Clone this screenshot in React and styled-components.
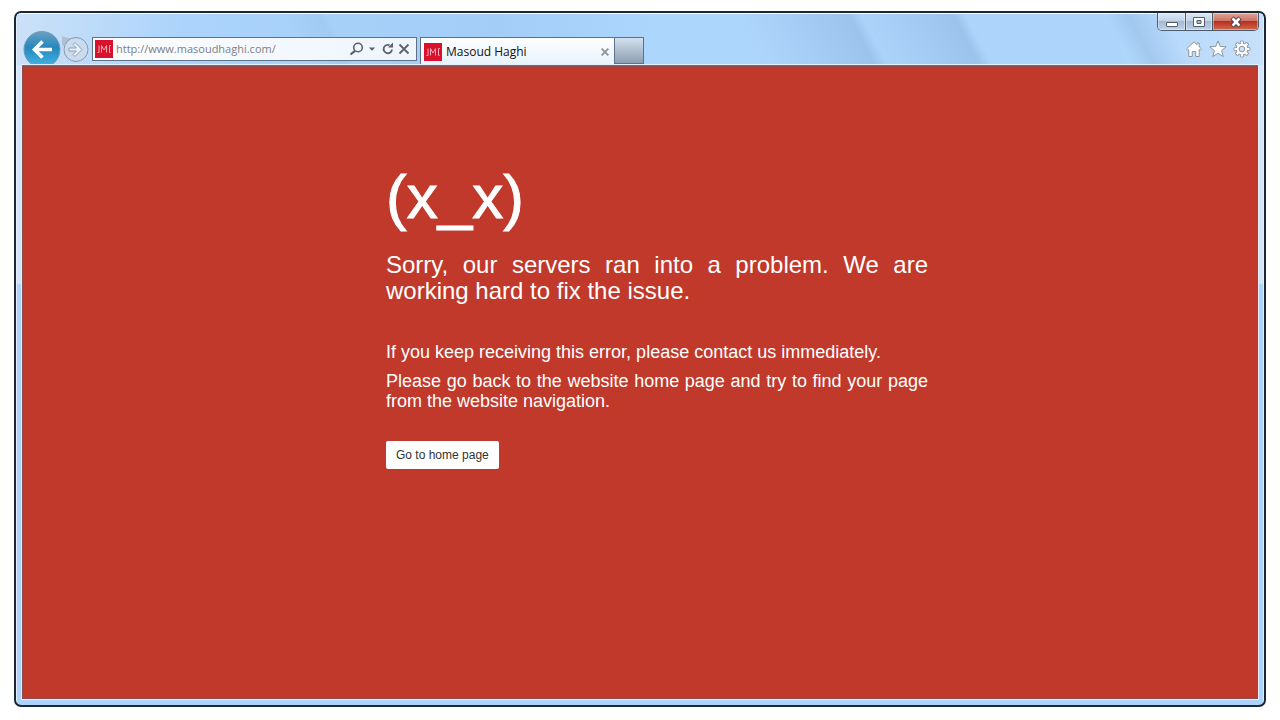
import React, { useState } from 'react';

import styled, { createGlobalStyle, ThemeProvider } from 'styled-components';

const theme = {
  page: '#c0392b',
  frame: '#1d2733',
  glass: '#abd3fb',
  line: '#5f7186',
  brand: '#d9112c',
  icon: '#5d6167',
  chromeFont: '"Open Sans", "Noto Sans", sans-serif',
  pageFont: '"Liberation Sans", Arial, sans-serif'
};

const GlobalStyle = createGlobalStyle`
  *, *::before, *::after {
    box-sizing: border-box;
  }

  body {
    margin: 0;
    background: #fff;
    font-family: ${theme.pageFont};
  }

  button, input {
    margin: 0;
    padding: 0;
    border: none;
    background: none;
    font: inherit;
  }

  svg {
    display: block;
  }
`;

const Desktop = styled.div`
  display: flex;
  min-height: 100vh;
  padding: 11px 14px 13px;
`;

const Window = styled.div`
  display: flex;
  flex: 1;
  flex-direction: column;
  padding: 0 6px 6px;
  border: 2px solid ${({theme}) => theme.frame};
  border-radius: 7px;
  background:
    linear-gradient(#fff, #fff) top / 100% 1px no-repeat,
    linear-gradient(#e2f0fe, #e2f0fe) left / 1px 100% no-repeat,
    linear-gradient(#e2f0fe, #e2f0fe) right / 1px 100% no-repeat,
    linear-gradient(#c4def9 0, #d6e7f9 54px, #d3e4f6 270px, ${({theme}) => theme.glass} 272px);
`;

const Chrome = styled.header`
  display: flex;
  justify-content: space-between;
  height: 51px;
  margin: 1px -5px 0;
  padding: 0 4px 0 5px;
  background:
    linear-gradient(62deg, transparent 56%, #96bde655 72%, transparent 76%) 165px 0 / 200px 51px no-repeat,
    linear-gradient(62deg, transparent 15%, #8db3de88 74%, transparent 81%) 720px 0 / 160px 51px no-repeat,
    linear-gradient(62deg, transparent 15%, #8db3de88 74%, transparent 81%) 832px 0 / 150px 51px no-repeat,
    linear-gradient(62deg, transparent 45%, #8db3de66 58%, transparent 80%) 1040px 0 / 140px 51px no-repeat,
    linear-gradient(90deg, #cbe1f8 0, ${({theme}) => theme.glass} 170px, #a3cdf7 480px, #add6fd 640px, #add5fc 1100px, #c8e0f9 100%);
`;

const NavBar = styled.div`
  display: flex;
  align-items: flex-start;
  padding: 16px 0 0 1px;
`;

const BackButton = styled.button`
  width: 39px;
  height: 35px;
  overflow: hidden;
`;

const ForwardButton = styled.button`
  width: 27px;
  height: 35px;
  margin-right: 3px;
`;

const AddressBar = styled.form`
  display: flex;
  align-items: center;
  width: 325px;
  height: 24px;
  margin-top: 7px;
  padding: 0 4px 0 2px;
  border: 1px solid ${({theme}) => theme.line};
  background: linear-gradient(90deg, #fcfdff, #eef5fd);
`;

const UrlInput = styled.input`
  flex: 1;
  min-width: 0;
  margin-left: 3px;
  outline: none;
  color: #7c8084;
  font-family: ${({theme}) => theme.chromeFont};
  font-size: 11px;
  line-height: 20px;
`;

const BarButton = styled.button`
  width: ${({$width}) => $width}px;
  height: 16px;
  cursor: pointer;
`;

const Tabs = styled.nav`
  display: flex;
  margin: 7px 0 0 3px;
`;

const Tab = styled.div`
  display: flex;
  align-items: center;
  width: 195px;
  height: 28px;
  padding: 0 3px;
  border: 1px solid ${({theme}) => theme.line};
  border-bottom: none;
  background: linear-gradient(#fff, #e6f2fd);
`;

const TabTitle = styled.span`
  flex: 1;
  margin-left: 4px;
  color: #111;
  font-family: ${({theme}) => theme.chromeFont};
  font-size: 12px;
  line-height: 20px;
`;

const NewTab = styled.button`
  width: 29px;
  height: 27px;
  border: 1px solid ${({theme}) => theme.line};
  border-left: none;
  background: linear-gradient(#d3e0ee, #a9b9ca 60%, #8c9eb2);
`;

const WindowTools = styled.div`
  display: flex;
  flex-direction: column;
  align-items: flex-end;
`;

const CaptionButtons = styled.div`
  display: flex;
  height: 18px;
  margin-top: -1px;
  border: 1px solid #4d5a69;
  border-top: none;
  border-radius: 0 0 5px 5px;
  overflow: hidden;
`;

const CaptionButton = styled.button`
  display: flex;
  align-items: center;
  justify-content: center;
  width: ${({$close}) => $close ? 46 : 27}px;
  background: ${({$close}) => $close
    ? 'linear-gradient(#dfa79c, #cf7466 45%, #b8301c 50%, #cf6a4e)'
    : 'linear-gradient(#dbe7f4, #c3d4e8 45%, #a4bad3 50%, #bdd2e9)'};
  box-shadow: inset 0 0 0 1px #ffffff66;

  & + & {
    border-left: 1px solid #4d5a69;
  }
`;

const ToolIcons = styled.div`
  display: flex;
  gap: 6px;
  margin: 9px 8px 0 0;
`;

const ToolButton = styled.button`
  width: 18px;
  height: 18px;
  cursor: pointer;
`;

const Viewport = styled.main`
  flex: 1;
  border-top: 1px solid ${({theme}) => theme.line};
  outline: 1px solid #e2f0fe;
  background: ${({theme}) => theme.page};
  box-shadow: inset 0 0 0 1px #8d4a4a;
  color: #fff;
`;

const Message = styled.section`
  max-width: 576px;
  margin: 0 auto;
  padding: 96px 0 40px 34px;
`;

const Face = styled.h1`
  margin: 0 0 20px;
  font-size: 62px;
  font-weight: 400;
  line-height: 70px;
  -webkit-text-stroke: 1px #fff;
`;

const Lead = styled.h2`
  margin: 0 0 38px;
  font-size: 24px;
  font-weight: 400;
  line-height: 26px;
  text-align: justify;
`;

const Text = styled.p`
  margin: 0 0 9px;
  font-size: 18px;
  line-height: 20px;
  text-align: justify;
`;

const HomeLink = styled.a`
  display: inline-block;
  margin-top: 21px;
  padding: 5px 10px;
  border-radius: 2px;
  background: #fff;
  color: #333;
  font-size: 12px;
  line-height: 18px;
  text-decoration: none;
`;

const Favicon = () => (
    <svg width="18" height="18" viewBox="0 0 18 18" aria-hidden="true">
      <rect width="18" height="18" fill={theme.brand} />
      <g fill="none" stroke="#f3a9b2" strokeWidth="1">
        <path d="M2.5 12.5h1.5v-7M15.5 12.5h-1v-7h1.5" />
        <path d="M6.5 12.5v-7l2.5 4.5 2.5-4.5v7" />
      </g>
    </svg>
);

const BackIcon = () => (
    <svg width="39" height="39" viewBox="0 0 39 39" aria-hidden="true">
      <defs>
        <linearGradient id="back" x1="0" y1="0" x2="0" y2="1">
          <stop offset="0" stopColor="#6ba0c0" />
          <stop offset="0.45" stopColor="#2687bd" />
          <stop offset="1" stopColor="#45b7e6" />
        </linearGradient>
      </defs>
      <circle cx="19" cy="19.5" r="18" fill="url(#back)" stroke="#6f9bb9" />
      <path d="M29 19.5H12M19.5 11.5l-8 8 8 8" fill="none" stroke="#fff" strokeWidth="3.6" />
    </svg>
);

const ForwardIcon = () => (
    <svg width="27" height="35" viewBox="0 0 27 35" aria-hidden="true">
      <path d="M0 6Q5 9 13 7.5Q4 10 1 17L-1 12Z" fill="#b0c0d2" />
      <circle cx="14" cy="19.5" r="12" fill="#cbdbee" stroke="#8798b0" />
      <path
          d="M7 18h7.5l-3.5-3.5 2-2 7 7-7 7-2-2 3.5-3.5H7z"
          fill="#eaf2fb"
          stroke="#8d9fb8"
          strokeLinejoin="round"
      />
    </svg>
);

const SearchIcon = () => (
    <svg width="16" height="16" viewBox="0 0 16 16" aria-hidden="true">
      <circle cx="10" cy="6.5" r="4.3" fill="none" stroke={theme.icon} strokeWidth="1.6" />
      <path d="M7 9.8L2.5 13.5" stroke={theme.icon} strokeWidth="2.2" />
    </svg>
);

const ArrowIcon = () => (
    <svg width="16" height="16" viewBox="0 0 16 16" aria-hidden="true">
      <path d="M4.8 6.5h6.4L8 9.7z" fill={theme.icon} />
    </svg>
);

const RefreshIcon = () => (
    <svg width="16" height="16" viewBox="0 0 16 16" aria-hidden="true">
      <path d="M9.5 4.2A4.2 4.2 0 1 0 12 8.5" fill="none" stroke={theme.icon} strokeWidth="1.8" />
      <path d="M8 6.5h5v-5z" fill={theme.icon} />
    </svg>
);

const CrossIcon = ({ size, color, width }) => (
    <svg width={size} height="16" viewBox="0 0 16 16" aria-hidden="true">
      <path d="M3.5 3.5l9 9M12.5 3.5l-9 9" stroke={color} strokeWidth={width} />
    </svg>
);

const MinimizeIcon = () => (
    <svg width="14" height="12" viewBox="0 0 14 12" aria-hidden="true">
      <rect x="1.5" y="6.5" width="11" height="4" rx="0.5" fill="#fff" stroke="#555d6b" />
    </svg>
);

const MaximizeIcon = () => (
    <svg width="14" height="12" viewBox="0 0 14 12" aria-hidden="true">
      <path fillRule="evenodd" d="M1.5 1.5h11v9h-11zM5 4.5v3h4v-3z" fill="#fff" stroke="#555d6b" />
    </svg>
);

const CloseIcon = () => (
    <svg width="14" height="12" viewBox="0 0 14 12" aria-hidden="true">
      <path d="M3 1.8l8 8.4M11 1.8l-8 8.4" stroke="#5b4650" strokeWidth="4.6" />
      <path d="M3.6 2.4l6.8 7.2M10.4 2.4l-6.8 7.2" stroke="#fff" strokeWidth="2.6" />
    </svg>
);

const HomeIcon = () => (
    <svg width="18" height="18" viewBox="0 0 18 18" aria-hidden="true">
      <path
          d="M9 1.8L1.5 9l1.3 1.4 1-.8v6.9h3.4v-5h3.6v5h3.4V9.6l1 .8L16.5 9l-2.3-2.2V3h-2.2v1.7z"
          fill="#fff"
          stroke="#8b95a3"
          strokeLinejoin="round"
      />
    </svg>
);

const StarIcon = () => (
    <svg width="18" height="18" viewBox="0 0 18 18" aria-hidden="true">
      <path
          d="M9 1l2.2 5.4 6 .4-4.6 3.8 1.6 5.9L9 13.3l-5.2 3.2 1.6-5.9L.8 6.8l6-.4z"
          fill="#fff"
          stroke="#8b95a3"
          strokeLinejoin="round"
      />
    </svg>
);

const GearIcon = () => (
    <svg width="18" height="18" viewBox="0 0 18 18" aria-hidden="true">
      {[0, 45, 90, 135].map(angle => (
          <rect
              key={angle}
              x="7.4"
              y="1"
              width="3.2"
              height="16"
              rx="0.8"
              fill="#fff"
              stroke="#8b95a3"
              transform={`rotate(${angle} 9 9)`}
          />
      ))}
      <circle cx="9" cy="9" r="5.8" fill="#fff" stroke="#8b95a3" />
      {[0, 45, 90, 135].map(angle => (
          <rect key={angle} x="7.9" y="2" width="2.2" height="14" fill="#fff" transform={`rotate(${angle} 9 9)`} />
      ))}
      <circle cx="9" cy="9" r="2.8" fill="#cfe2f7" stroke="#8b95a3" />
    </svg>
);

const BrowserChrome = () => {
  const [url, setUrl] = useState('http://www.masoudhaghi.com/');

  return (
      <Chrome>
        <NavBar>
          <BackButton type="button" aria-label="Back"><BackIcon /></BackButton>
          <ForwardButton type="button" aria-label="Forward"><ForwardIcon /></ForwardButton>
          <AddressBar onSubmit={e => e.preventDefault()}>
            <Favicon />
            <UrlInput aria-label="Address" value={url} onChange={e => setUrl(e.target.value)} />
            <BarButton $width={16} type="submit" aria-label="Search"><SearchIcon /></BarButton>
            <BarButton $width={16} type="button" aria-label="Show history"><ArrowIcon /></BarButton>
            <BarButton $width={16} type="button" aria-label="Refresh"><RefreshIcon /></BarButton>
            <BarButton $width={16} type="button" aria-label="Stop">
              <CrossIcon size={16} color={theme.icon} width={1.8} />
            </BarButton>
          </AddressBar>
          <Tabs>
            <Tab>
              <Favicon />
              <TabTitle>Masoud Haghi</TabTitle>
              <BarButton $width={12} type="button" aria-label="Close tab">
                <CrossIcon size={12} color="#8f9398" width={2.4} />
              </BarButton>
            </Tab>
            <NewTab type="button" aria-label="New tab" />
          </Tabs>
        </NavBar>
        <WindowTools>
          <CaptionButtons>
            <CaptionButton type="button" aria-label="Minimize"><MinimizeIcon /></CaptionButton>
            <CaptionButton type="button" aria-label="Maximize"><MaximizeIcon /></CaptionButton>
            <CaptionButton $close type="button" aria-label="Close"><CloseIcon /></CaptionButton>
          </CaptionButtons>
          <ToolIcons>
            <ToolButton type="button" aria-label="Home"><HomeIcon /></ToolButton>
            <ToolButton type="button" aria-label="Favorites"><StarIcon /></ToolButton>
            <ToolButton type="button" aria-label="Tools"><GearIcon /></ToolButton>
          </ToolIcons>
        </WindowTools>
      </Chrome>
  );
};

const ErrorPage = () => (
    <Viewport>
      <Message>
        <Face>(x_x)</Face>
        <Lead>Sorry, our servers ran into a problem. We are working hard to fix the issue.</Lead>
        <Text>If you keep receiving this error, please contact us immediately.</Text>
        <Text>Please go back to the website home page and try to find your page from the website navigation.</Text>
        <HomeLink href="/">Go to home page</HomeLink>
      </Message>
    </Viewport>
);

const App = () => (
    <ThemeProvider theme={theme}>
      <GlobalStyle />
      <Desktop>
        <Window>
          <BrowserChrome />
          <ErrorPage />
        </Window>
      </Desktop>
    </ThemeProvider>
);

export default App;
